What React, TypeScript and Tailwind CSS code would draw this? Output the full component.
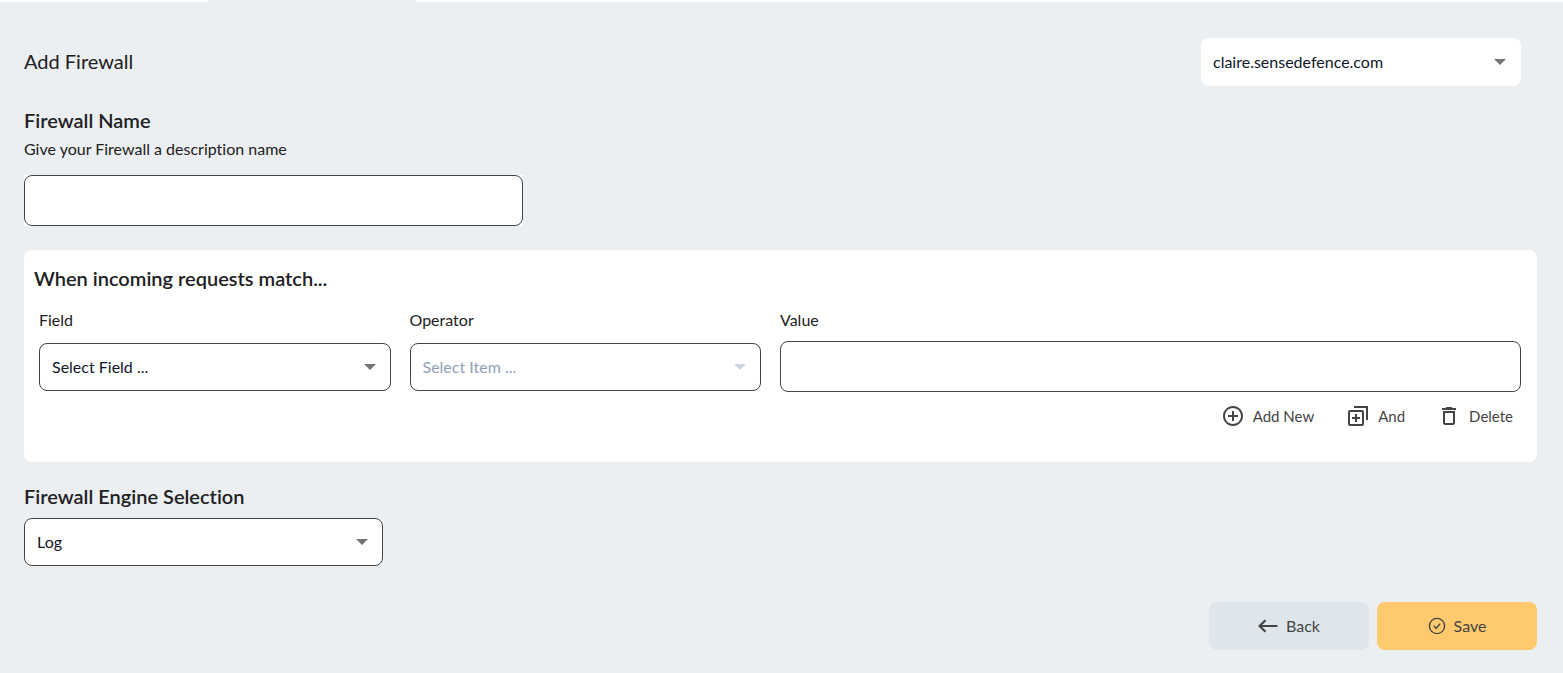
import { useState } from 'react';
import type { ReactNode, SelectHTMLAttributes } from 'react';
import { clsx } from 'clsx';
import { MdControlPoint, MdDeleteOutline } from 'react-icons/md';

function AddGroupIcon() {
  return (
    <svg viewBox="0 0 24 24" className="size-6" fill="none" stroke="currentColor" strokeWidth="2" aria-hidden="true">
      <rect x="3" y="7" width="14" height="14" rx="1" />
      <path d="M8 3h13v13M10 10v8M6 14h8" />
    </svg>
  );
}

function BackIcon() {
  return (
    <svg viewBox="0 0 20 20" className="size-5" fill="none" stroke="currentColor" strokeWidth="2.2" strokeLinejoin="round" aria-hidden="true">
      <path d="M19.5 10H1.5M7.5 4.2L1.5 10l6 5.8" />
    </svg>
  );
}

function SaveIcon() {
  return (
    <svg viewBox="0 0 18 18" className="size-[18px]" fill="none" stroke="currentColor" strokeWidth="1.4" strokeLinecap="round" strokeLinejoin="round" aria-hidden="true">
      <circle cx="9" cy="9" r="7.6" />
      <path d="M6.2 9.2l2 2.2 3.6-4.4" />
    </svg>
  );
}

interface SelectBoxProps extends SelectHTMLAttributes<HTMLSelectElement> {
  bordered?: boolean;
  options: string[];
}

function SelectBox({ bordered = true, options, disabled, ...props }: SelectBoxProps) {
  return (
    <div className="relative w-full">
      <select
        {...props}
        disabled={disabled}
        className={clsx(
          'block h-12 w-full appearance-none rounded-lg bg-white pr-10 pl-3 text-base text-slate-900 disabled:text-slate-400 disabled:opacity-100',
          bordered && 'border border-[#444]',
        )}
      >
        {options.map((option) => (
          <option key={option}>{option}</option>
        ))}
      </select>
      <svg
        viewBox="0 0 12 6"
        className={clsx('pointer-events-none absolute top-1/2 right-[15px] h-[6px] w-3 -translate-y-1/2', disabled ? 'text-slate-300' : 'text-[#757575]')}
        fill="currentColor"
        aria-hidden="true"
      >
        <path d="M0 0h12L6 6z" />
      </svg>
    </div>
  );
}

function RuleAction({ icon, children }: { icon: ReactNode; children: ReactNode }) {
  return (
    <button type="button" className="flex items-center gap-2 text-[15px] leading-6 text-[#444]">
      {icon}
      {children}
    </button>
  );
}

const inputClass = 'block h-[51px] w-full rounded-lg border border-[#444] bg-white px-3 text-base';

export default function App() {
  const [name, setName] = useState('');
  const [value, setValue] = useState('');

  return (
    <div className="min-h-screen bg-[#ebeff2] font-['Lato',sans-serif] text-base text-[#212121] [font-variant-ligatures:no-common-ligatures]">
      {/* Bottom edge of the tab bar, second tab active */}
      <div className="flex h-[2px]">
        <div className="w-52 bg-white" />
        <div className="w-52" />
        <div className="flex-1 bg-white" />
      </div>

      <form className="pt-9 pr-[26px] pb-[22px] pl-6" onSubmit={(e) => e.preventDefault()}>
        <div className="flex items-center justify-between pr-4">
          <h1 className="pb-[2px] text-xl">Add Firewall</h1>
          <div className="w-80">
            <SelectBox bordered={false} aria-label="Domain" options={['claire.sensedefence.com']} />
          </div>
        </div>

        <div className="mt-5">
          <label htmlFor="firewall-name" className="block text-xl font-semibold">
            Firewall Name
          </label>
          <p id="firewall-name-hint" className="mt-[3px] leading-6">Give your Firewall a description name</p>
          <div className="mt-[14px] w-1/3 pr-[5px]">
            <div className="bg-white">
              <input
                id="firewall-name"
                aria-describedby="firewall-name-hint"
                type="text"
                value={name}
                onChange={(e) => setName(e.target.value)}
                className={inputClass}
              />
            </div>
          </div>
        </div>

        <section className="mt-6 rounded-lg bg-white px-[10px] pt-[14px] pb-[34px]">
          <h2 className="text-xl font-semibold">When incoming requests match...</h2>
          <div className="mt-4 grid grid-cols-4 pr-[6px] pl-[5px]">
            <div className="pr-[19px]">
              <label htmlFor="field" className="mb-[11px] block">Field</label>
              <SelectBox id="field" options={['Select Field ...']} />
            </div>
            <div className="pr-[19px]">
              <label htmlFor="operator" className="mb-[11px] block">Operator</label>
              <SelectBox id="operator" disabled options={['Select Item ...']} />
            </div>
            <div className="col-span-2">
              <label htmlFor="value" className="mb-[9px] block">Value</label>
              <input id="value" type="text" value={value} onChange={(e) => setValue(e.target.value)} className={inputClass} />
            </div>
          </div>
          <div className="mt-3 flex justify-end gap-8 pr-[14px]">
            <RuleAction icon={<MdControlPoint className="size-6" />}>Add New</RuleAction>
            <RuleAction icon={<AddGroupIcon />}>And</RuleAction>
            <RuleAction icon={<MdDeleteOutline className="size-6" />}>Delete</RuleAction>
          </div>
        </section>

        <div className="mt-5">
          <label htmlFor="engine" className="block text-xl font-semibold">
            Firewall Engine Selection
          </label>
          <div className="mt-2 w-[359px] max-w-full">
            <SelectBox id="engine" options={['Log']} />
          </div>
        </div>

        <div className="mt-9 flex justify-end gap-2 text-[#444]">
          <button type="button" className="flex h-12 w-40 items-center justify-center gap-2 rounded-lg bg-[#dee6ec]">
            <BackIcon />
            Back
          </button>
          <button type="submit" className="flex h-12 w-40 items-center justify-center gap-2 rounded-lg bg-[#ffc96e]">
            <SaveIcon />
            Save
          </button>
        </div>
      </form>
    </div>
  );
}
